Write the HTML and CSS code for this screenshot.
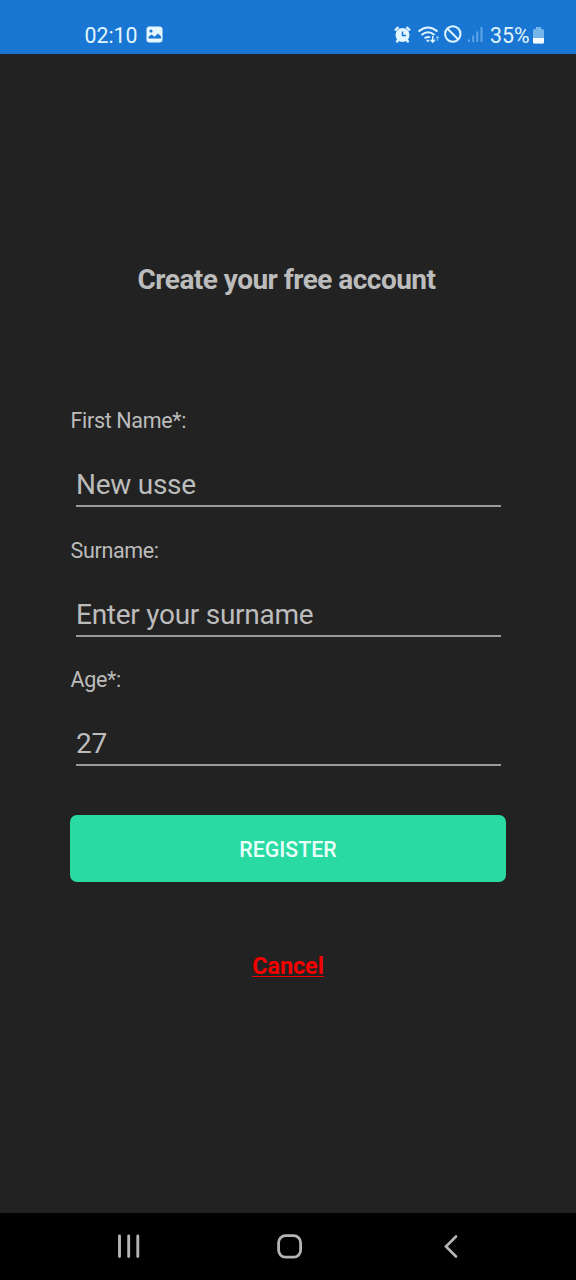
FILE: index.html
```html
<!DOCTYPE html>
<html lang="en">
<head>
<meta charset="utf-8">
<title>Create your free account</title>
<link rel="stylesheet" href="styles.css">
</head>
<body>
<div class="screen">
  <header class="status">
    <span class="clock">02:10</span>
    <svg class="photo" width="17" height="17" viewBox="0 0 17 17"><rect x=".5" y=".5" width="16" height="16" rx="3" fill="#e4f7ff"/><circle cx="5" cy="5" r="1.600" fill="#1976d2"/><path d="M2.500 12.500v-1.500L5.500 8.500l3 2.300L12 7.500l3 3v2z" fill="#1976d2"/></svg>
    <svg class="icons" width="94" height="22" viewBox="392 24 94 22" fill="none" stroke="#e1f5ff">
      <circle cx="402.500" cy="35" r="7" fill="#e1f5ff" stroke="none"/>
      <path d="M395 30.500l3.500-3.300M410 30.500l-3.500-3.300M398.500 39.500l-2 2.700M406.500 39.500l2 2.700" stroke-width="2.400"/>
      <path d="M402.500 31.500v4h3.500" stroke="#1976d2" stroke-width="1.500"/>
      <path d="M418.500 31.500Q428 23.500 437.500 31.500M421.500 35Q428 29.500 434.500 35M424.500 38.200Q427.500 36 430 37.500" stroke-width="2"/>
      <path d="M426 40l2 2.300 1.500-1.500-1.500-1.300z" fill="#e1f5ff" stroke="none"/>
      <path d="M432.700 36v5.500M430.500 39.800l2.200 2.400 2.200-2.400" stroke-width="1.500"/>
      <path d="M437.500 41v-4.500M436 38.200l1.500-1.700 1.500 1.700" stroke="#72b6ec" stroke-width="1.200"/>
      <circle cx="452.800" cy="34" r="7.700" stroke-width="2"/>
      <path d="M447.500 28.700l10.600 10.600" stroke-width="2"/>
      <path d="M469 39.500V42M473.200 35.500V42M477.300 31.500V42M481.500 27V42" stroke="#5da5e6" stroke-width="2"/>
    </svg>
    <span class="percent">35%</span>
    <svg class="battery" width="11" height="17" viewBox="0 0 11 17"><path d="M3 0h5v2h1.500q1.500 0 1.500 1.500V15q0 1.500-1.500 1.500h-8Q0 16.500 0 15V3.500Q0 2 1.500 2H3z" fill="#75b5ec"/><path d="M0 11h11v4q0 1.500-1.500 1.500h-8Q0 16.500 0 15z" fill="#f4fcff"/></svg>
  </header>
  <main class="content">
    <h1 class="title">Create your free account</h1>
    <form class="form">
      <div class="field"><label class="label">First Name*:</label><div class="input">New usse</div></div>
      <div class="field"><label class="label">Surname:</label><div class="input">Enter your surname</div></div>
      <div class="field"><label class="label">Age*:</label><div class="input">27</div></div>
      <button class="register" type="button">REGISTER</button>
    </form>
    <a class="cancel">Cancel</a>
  </main>
  <nav class="nav">
    <svg width="576" height="67" viewBox="0 1213 576 67" fill="none" stroke="#b4b4b4" stroke-linecap="round">
      <path d="M119.500 1236v20.500M128.700 1236v20.500M137.800 1236v20.500" stroke-width="2.900"/>
      <rect x="278.600" y="1235.600" width="22" height="21.600" rx="7" stroke-width="2.800"/>
      <path d="M456 1236.500L446 1246.500l10 10" stroke-width="2.700"/>
    </svg>
  </nav>
</div>
</body>
</html>
```
FILE: styles.css
```css
* { box-sizing: border-box; }
body { margin: 0; background: #222; font-family: Roboto, sans-serif; }
.screen { width: 576px; height: 1280px; display: flex; flex-direction: column; overflow: hidden; }
.status { height: 54px; background: #1976d2; display: flex; align-items: flex-start; color: #e1f5ff; }
.clock { margin: 23px 0 0 84.500px; width: 61.500px; font-size: 21.300px; line-height: 25px; white-space: nowrap; }
.photo { margin-top: 26px; }
.icons { margin: 24px 0 0 229px; flex: none; }
.percent { margin: 23px 0 0 4px; width: 43px; font-size: 21.300px; line-height: 25px; }
.battery { margin-top: 26.500px; flex: none; }
.content { height: 1159px; background: #222; color: #bcbcbc; display: flex; flex-direction: column; align-items: center; }
.title { margin: 209px 0 0 -3px; height: 34px; font-size: 28px; line-height: 34px; font-weight: 700; letter-spacing: -.530px; white-space: nowrap; }
.form { width: 436px; margin-top: 110px; }
.field { height: 129.500px; }
.label { display: block; height: 28px; padding-left: .5px; font-size: 21.500px; line-height: 28px; letter-spacing: -.340px; }
.input { margin: 19px 5.500px 0; height: 53px; padding-left: .5px; border-bottom: 2px solid #9a9a9a; font-size: 28px; line-height: 61px; letter-spacing: -.270px; }
.register { display: block; width: 436px; height: 67px; margin-top: 19.500px; border: 0; border-radius: 7px; background: #2adaa3; color: #e9fff9; font: 500 21.300px/69px Roboto, sans-serif; padding: 0; }
.cancel { margin-top: 70px; color: #f60000; font-size: 23.300px; line-height: 28px; font-weight: 700; text-decoration: underline; text-decoration-thickness: 1px; text-underline-offset: 2px; }
.nav { height: 67px; background: #000; }
.nav svg { display: block; }
```
